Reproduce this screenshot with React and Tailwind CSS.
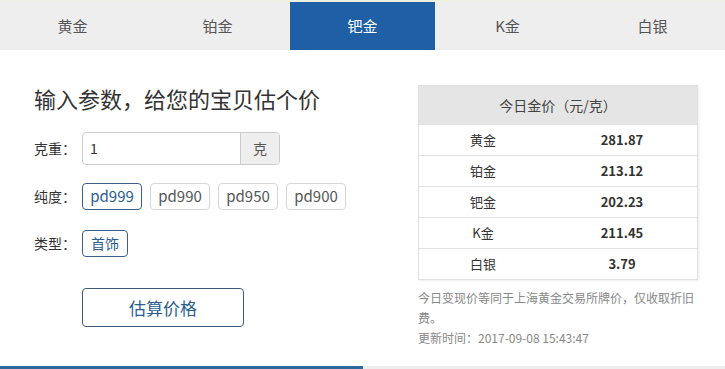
import React, { useState } from 'react';

const tabs = ['黄金', '铂金', '钯金', 'K金', '白银'];
const purities = ['pd999', 'pd990', 'pd950', 'pd900'];
const prices = [
  ['黄金', '281.87'],
  ['铂金', '213.12'],
  ['钯金', '202.23'],
  ['K金', '211.45'],
  ['白银', '3.79'],
];

const App = () => {
  const [tab, setTab] = useState(2);
  const [weight, setWeight] = useState('1');
  const [purity, setPurity] = useState('pd999');

  return (
    <div
      className="w-[725px] h-[369px] bg-white overflow-hidden flex flex-col text-[#333]"
      style={{ fontFamily: '"Noto Sans CJK SC", "Liberation Sans", sans-serif' }}
    >
      <div className="h-[2px] bg-[#eef0e2]" />
      {/* tabs */}
      <div className="flex h-[48px] bg-[#eeeeee]">
        {tabs.map((t, i) => (
          <button
            key={t}
            onClick={() => setTab(i)}
            className={
              'flex-1 text-[15px] flex items-center justify-center ' +
              (tab === i ? 'bg-[#1f5fa6] text-white' : 'text-[#555]')
            }
          >
            {t}
          </button>
        ))}
      </div>

      <div className="flex flex-1">
        {/* form */}
        <div className="w-[418px] pl-[34px] pt-[33px]">
          <h1 className="text-[22px] leading-[30px] text-[#333]">输入参数，给您的宝贝估个价</h1>

          <div className="flex items-center mt-[19px]">
            <span className="w-[48px] text-[14px]">克重：</span>
            <div className="flex h-[33px] w-[198px] border border-[#ccc] rounded-[4px] overflow-hidden">
              <input
                value={weight}
                onChange={(e) => setWeight(e.target.value)}
                className="flex-1 min-w-0 px-[7px] text-[14px] outline-none"
              />
              <span className="w-[39px] bg-[#eeeeee] border-l border-[#ccc] flex items-center justify-center text-[14px] text-[#555]">
                克
              </span>
            </div>
          </div>

          <div className="flex items-center mt-[18px]">
            <span className="w-[48px] text-[14px]">纯度：</span>
            <div className="flex gap-[8px]">
              {purities.map((p) => (
                <button
                  key={p}
                  onClick={() => setPurity(p)}
                  className={
                    'h-[27px] w-[60px] rounded-[4px] border text-[15px] flex items-center justify-center ' +
                    (purity === p ? 'border-[#3b5f86] text-[#2a5d92]' : 'border-[#d6d6d6] text-[#555]')
                  }
                >
                  {p}
                </button>
              ))}
            </div>
          </div>

          <div className="flex items-center mt-[20px]">
            <span className="w-[48px] text-[14px]">类型：</span>
            <button className="h-[27px] w-[46px] rounded-[4px] border border-[#3b5f86] text-[#2a5d92] text-[14px] flex items-center justify-center">
              首饰
            </button>
          </div>

          <button className="mt-[31px] ml-[48px] h-[39px] w-[162px] rounded-[4px] border border-[#3e5a78] text-[#2a5d92] text-[17px] flex items-center justify-center">
            估算价格
          </button>
        </div>

        {/* price table */}
        <div className="w-[280px] pt-[35px]">
          <div className="border border-[#e0e0e0] shadow-[1px_1px_2px_rgba(0,0,0,0.08)]">
            <div className="h-[38px] bg-[#e5e5e5] flex items-center justify-center text-[14px] text-[#444]">
              今日金价（元/克）
            </div>
            {prices.map(([name, val]) => (
              <div key={name} className="flex h-[31px] border-t border-[#e3e3e3] items-center text-[13px]">
                <span className="w-[128px] text-center text-[#333]">{name}</span>
                <span className="flex-1 text-center font-bold text-[#333]">{val}</span>
              </div>
            ))}
          </div>
          <p className="mt-[8px] text-[12px] leading-[20px] text-[#888]">
            今日变现价等同于上海黄金交易所牌价，仅收取折旧费。
            <br />
            更新时间：2017-09-08 15:43:47
          </p>
        </div>
      </div>

      <div className="flex h-[3px]">
        <div className="w-[363px] bg-[#2b6a9c]" />
        <div className="flex-1 bg-[#eeeeee]" />
      </div>
    </div>
  );
};

export default App;
